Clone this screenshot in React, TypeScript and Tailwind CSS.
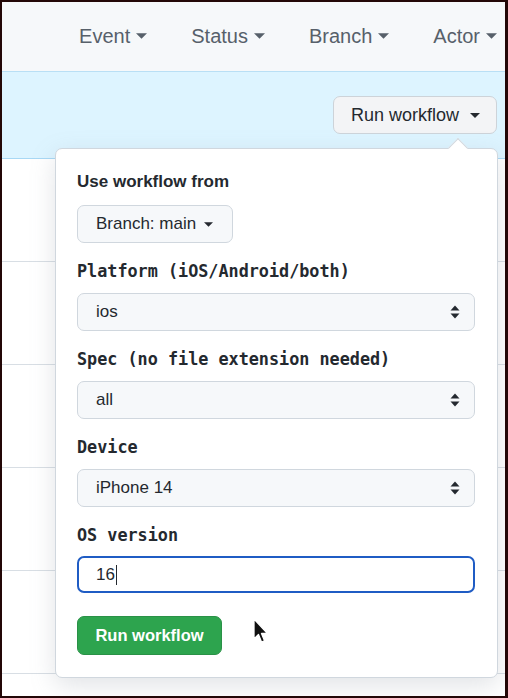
import React from "react";

const sans = { fontFamily: '"Liberation Sans", Arial, sans-serif' };
const mono = { fontFamily: '"DejaVu Sans Mono", "Liberation Mono", monospace' };

function Caret({ w = 11, h = 6, color = "#57606a" }: { w?: number; h?: number; color?: string }) {
  return (
    <svg width={w} height={h} viewBox="0 0 10 5" className="shrink-0">
      <path d="M0 0 L10 0 L5 5 Z" fill={color} />
    </svg>
  );
}

function UpDown() {
  return (
    <svg width="10" height="14" viewBox="0 0 10 14" className="shrink-0">
      <path d="M5 0.5 L9.5 5.5 L0.5 5.5 Z" fill="#24292f" />
      <path d="M5 13.5 L9.5 8.5 L0.5 8.5 Z" fill="#24292f" />
    </svg>
  );
}

function Select({ value }: { value: string }) {
  return (
    <div className="mt-[12px] flex h-[38px] items-center justify-between rounded-[7px] border border-[#d0d7de] bg-[#f6f8fa] pl-[18px] pr-[14px] text-[17px] text-[#24292f]">
      <span>{value}</span>
      <UpDown />
    </div>
  );
}

function Label({ children }: { children: React.ReactNode }) {
  return (
    <div className="mt-[18px] h-[20px] text-[16.8px] font-bold leading-[20px] text-[#24292f]" style={mono}>
      {children}
    </div>
  );
}

export default function App() {
  return (
    <div className="h-[698px] w-[508px] overflow-hidden bg-[#230707] pb-[2px] pl-[2px] pr-[3px] pt-[2px]" style={sans}>
      <div className="relative h-[694px] w-[503px] overflow-hidden bg-white">
        {/* header */}
        <div className="flex h-[70px] items-center justify-end gap-[44px] border-b border-[#b9dff5] bg-[#f6f8fa] pb-[1px] pr-[8px] text-[20px] text-[#57606a]">
          {["Event", "Status", "Branch", "Actor"].map((t) => (
            <div key={t} className="flex items-center gap-[6px]">
              <span>{t}</span>
              <Caret />
            </div>
          ))}
        </div>
        {/* blue band */}
        <div className="flex h-[87px] justify-end border-b border-[#a8d8f5] bg-[#ddf4ff] pr-[8px] pt-[24px]">
          <div className="flex h-[38px] w-[164px] items-center justify-between rounded-[7px] border border-[#cdd3d9] bg-[#f3f4f6] pl-[17px] pr-[16px] text-[18px] text-[#24292f]">
            <span>Run workflow</span>
            <Caret w={10} h={5} color="#24292f" />
          </div>
        </div>
        {/* rows */}
        {[0, 1, 2, 3, 4].map((i) => (
          <div key={i} className="h-[103px] border-b border-[#d8dee4] bg-white" />
        ))}

        {/* popover */}
        <div className="absolute left-[53px] top-[146px] w-[443px] rounded-[7px] border border-[#d0d7de] bg-white pb-[22px] pl-[21px] pr-[22px] pt-[23px] shadow-[0_8px_24px_rgba(140,149,159,0.25)]">
          {/* arrow */}
          <div className="absolute right-[32px] top-[-8px] h-[14px] w-[14px] rotate-45 border-l border-t border-[#d0d7de] bg-white" />
          <div className="relative h-[20px] text-[17px] font-bold leading-[20px] text-[#24292f]">Use workflow from</div>
          <div className="mt-[13px] flex h-[38px] w-[156px] items-center gap-[8px] rounded-[7px] border border-[#d0d7de] bg-[#f6f8fa] pl-[18px] text-[17px] text-[#24292f]">
            <span>Branch: main</span>
            <Caret w={9} h={5} color="#24292f" />
          </div>
          <Label>Platform (iOS/Android/both)</Label>
          <Select value="ios" />
          <Label>Spec (no file extension needed)</Label>
          <Select value="all" />
          <Label>Device</Label>
          <Select value="iPhone 14" />
          <Label>OS version</Label>
          <div className="mt-[11px] flex h-[37px] items-center rounded-[7px] border-2 border-[#1f5cc4] bg-white pl-[17px] text-[17px] text-[#24292f]">
            <span>16</span>
            <span className="ml-[1px] inline-block h-[20px] w-[1.5px] bg-[#24292f]" />
          </div>
          <div className="mt-[23px] flex h-[39px] w-[145px] items-center justify-center rounded-[7px] border border-[#2a9147] bg-[#2da44e] text-[16.5px] font-bold text-white">
            Run workflow
          </div>
        </div>

        {/* mouse cursor */}
        <svg className="absolute left-[250px] top-[616px]" width="18" height="28" viewBox="0 0 18 28">
          <path d="M2 1 L2 21 L6.5 16.5 L9.5 24 L12.5 22.8 L9.5 15.5 L15.5 15.5 Z" fill="#111" stroke="#fff" strokeWidth="1.3" strokeLinejoin="round" />
        </svg>
      </div>
    </div>
  );
}
